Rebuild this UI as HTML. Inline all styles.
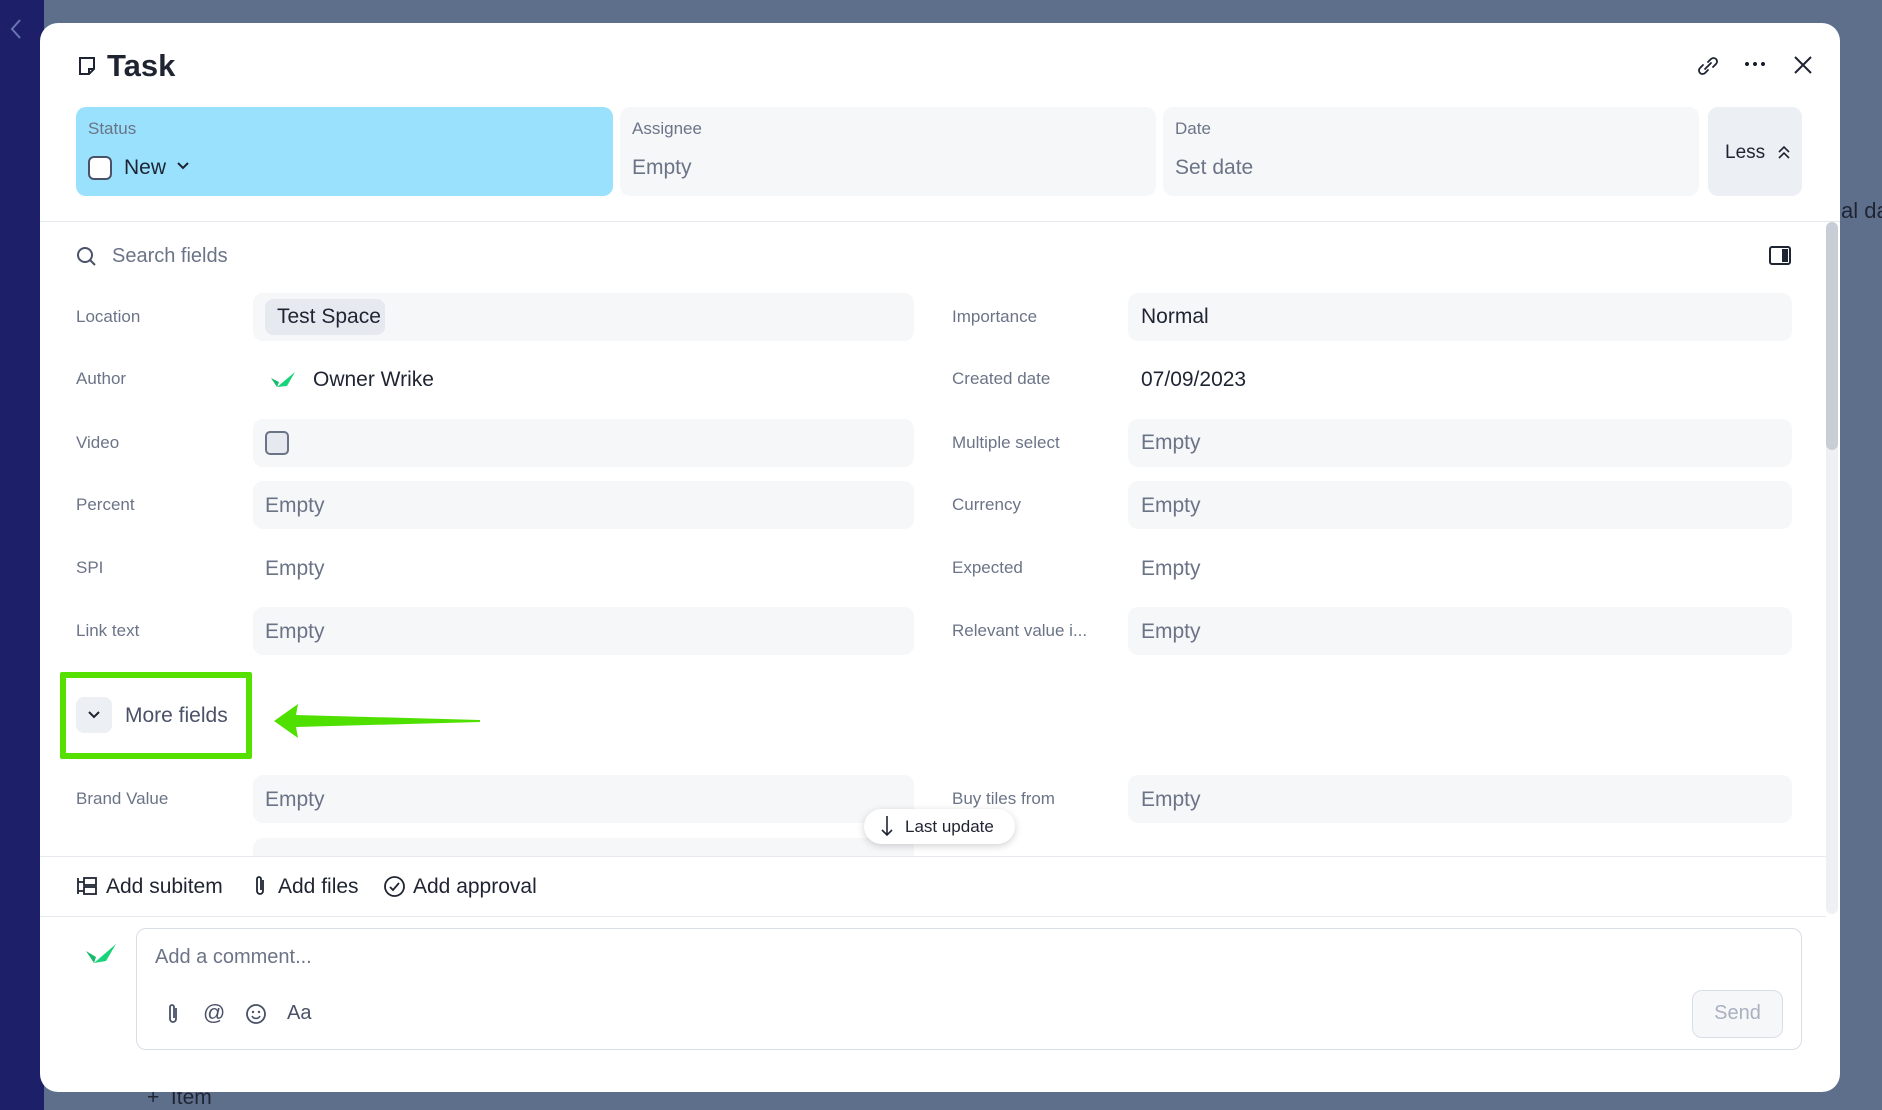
<!DOCTYPE html>
<html><head><meta charset="utf-8"><style>
*{box-sizing:border-box;margin:0;padding:0}
body{width:1882px;height:1110px;overflow:hidden;background:#5e6f8c;font-family:"Liberation Sans",sans-serif;position:relative;color:#1f2433}
.a{position:absolute;white-space:nowrap}
.sb{left:0;top:0;width:44px;height:1110px;background:#1d2068}
.modal{left:40px;top:23px;width:1800px;height:1069px;background:#fff;border-radius:18px}
.box{background:#f6f7f9;border-radius:10px}
.lbl{color:#6b7487;font-size:17px}
.val{font-size:21px;color:#1f2433}
.emp{font-size:21px;color:#6b7487}
.hl{height:1px;background:#e6e9ee}
</style></head><body>
<div class="a sb"></div>
<svg class="a" style="left:8px;top:18px" width="16" height="22"><path d="M12 2L4 11l8 9" stroke="#6a74b0" stroke-width="2" fill="none"/></svg>
<div class="a" style="left:147px;top:1086px;color:#1f2433;font-size:21px">+ &nbsp;Item</div>
<div class="a" style="left:1841px;top:198px;color:#1f2433;font-size:22px">al da</div>
<div class="a modal"></div>
<!-- header -->
<svg class="a" style="left:78px;top:56px" width="18" height="20"><path d="M2 2h14v11l-5 5H2z M11 18v-5h5" stroke="#1f2433" stroke-width="2" fill="none"/></svg>
<div class="a" style="left:107px;top:48px;font-size:31px;font-weight:bold">Task</div>
<svg class="a" style="left:1694px;top:52px" width="28" height="28"><path d="M11 17l6-6M9 13l-3 3a3.5 3.5 0 005 5l3-3M19 15l3-3a3.5 3.5 0 00-5-5l-3 3" stroke="#1f2433" stroke-width="1.8" fill="none" stroke-linecap="round"/></svg>
<div class="a" style="left:1743px;top:62px;width:22px;height:4px;background:radial-gradient(circle,#1f2433 2px,transparent 2.2px) 0 0/8px 4px"></div>
<svg class="a" style="left:1792px;top:54px" width="22" height="22"><path d="M3 3l16 16M19 3L3 19" stroke="#1f2433" stroke-width="2"/></svg>
<div class="a" style="left:76px;top:107px;width:537px;height:89px;background:#99e1fc;border-radius:10px"></div>
<div class="a lbl" style="left:88px;top:119px">Status</div>
<div class="a" style="left:88px;top:156px;width:24px;height:24px;border:2px solid #4a5268;border-radius:6px;background:#fff"></div>
<div class="a val" style="left:124px;top:156px">New</div>
<svg class="a" style="left:176px;top:160px" width="14" height="12"><path d="M2 3l5 5 5-5" stroke="#1f2433" stroke-width="2" fill="none"/></svg>
<div class="a box" style="left:620px;top:107px;width:536px;height:89px"></div>
<div class="a lbl" style="left:632px;top:119px">Assignee</div>
<div class="a emp" style="left:632px;top:156px">Empty</div>
<div class="a box" style="left:1163px;top:107px;width:536px;height:89px"></div>
<div class="a lbl" style="left:1175px;top:119px">Date</div>
<div class="a emp" style="left:1175px;top:156px">Set date</div>
<div class="a" style="left:1708px;top:107px;width:94px;height:89px;background:#eceff3;border-radius:10px"></div>
<div class="a" style="left:1725px;top:142px;font-size:19px;color:#1f2433">Less</div>
<svg class="a" style="left:1776px;top:144px" width="16" height="16"><path d="M3 8l5-5 5 5M3 14l5-5 5 5" stroke="#1f2433" stroke-width="1.6" fill="none"/></svg>
<div class="a hl" style="left:40px;top:221px;width:1800px"></div>
<!-- scrollbar -->
<div class="a" style="left:1826px;top:222px;width:12px;height:692px;background:#eef0f3;border-radius:6px"></div>
<div class="a" style="left:1826px;top:222px;width:12px;height:228px;background:#c9ced6;border-radius:6px"></div>
<!-- search -->
<svg class="a" style="left:76px;top:246px" width="22" height="22"><circle cx="9" cy="9" r="7" stroke="#4a5268" stroke-width="2" fill="none"/><path d="M14 14l5 5" stroke="#4a5268" stroke-width="2"/></svg>
<div class="a" style="left:112px;top:245px;font-size:20px;color:#6b7487">Search fields</div>
<svg class="a" style="left:1769px;top:246px" width="22" height="20"><rect x="1" y="1" width="20" height="17" rx="2" stroke="#1f2433" stroke-width="2" fill="none"/><rect x="13" y="3" width="6" height="13" fill="#1f2433"/></svg>
<!-- rows -->
<div class="a box" style="left:253px;top:293px;width:661px;height:48px"></div>
<div class="a" style="left:265px;top:299px;width:120px;height:36px;background:#e6eaf0;border-radius:8px"></div>
<div class="a val" style="left:277px;top:305px">Test Space</div>
<div class="a lbl" style="left:76px;top:307px">Location</div>
<div class="a lbl" style="left:952px;top:307px">Importance</div>
<div class="a box" style="left:1128px;top:293px;width:664px;height:48px"></div>
<div class="a val" style="left:1141px;top:305px">Normal</div>

<div class="a lbl" style="left:76px;top:369px">Author</div>
<svg class="a" style="left:269px;top:370px" width="28" height="20"><path d="M2 8l6 9 2-5z" fill="#17b96b"/><path d="M8 17L26 2l-8 14z" fill="#19d37a"/></svg>
<div class="a val" style="left:313px;top:368px">Owner Wrike</div>
<div class="a lbl" style="left:952px;top:369px">Created date</div>
<div class="a val" style="left:1141px;top:368px">07/09/2023</div>

<div class="a box" style="left:253px;top:419px;width:661px;height:48px"></div>
<div class="a" style="left:265px;top:431px;width:24px;height:24px;border:2px solid #6b7487;border-radius:5px;background:#e6eaf0"></div>
<div class="a lbl" style="left:76px;top:433px">Video</div>
<div class="a lbl" style="left:952px;top:433px">Multiple select</div>
<div class="a box" style="left:1128px;top:419px;width:664px;height:48px"></div>
<div class="a emp" style="left:1141px;top:431px">Empty</div>

<div class="a box" style="left:253px;top:481px;width:661px;height:48px"></div>
<div class="a lbl" style="left:76px;top:495px">Percent</div>
<div class="a emp" style="left:265px;top:494px">Empty</div>
<div class="a lbl" style="left:952px;top:495px">Currency</div>
<div class="a box" style="left:1128px;top:481px;width:664px;height:48px"></div>
<div class="a emp" style="left:1141px;top:494px">Empty</div>

<div class="a lbl" style="left:76px;top:558px">SPI</div>
<div class="a emp" style="left:265px;top:557px">Empty</div>
<div class="a lbl" style="left:952px;top:558px">Expected</div>
<div class="a emp" style="left:1141px;top:557px">Empty</div>

<div class="a box" style="left:253px;top:607px;width:661px;height:48px"></div>
<div class="a lbl" style="left:76px;top:621px">Link text</div>
<div class="a emp" style="left:265px;top:620px">Empty</div>
<div class="a lbl" style="left:952px;top:621px">Relevant value i...</div>
<div class="a box" style="left:1128px;top:607px;width:664px;height:48px"></div>
<div class="a emp" style="left:1141px;top:620px">Empty</div>

<!-- more fields -->
<div class="a" style="left:60px;top:672px;width:192px;height:87px;border:6px solid #56e000;border-radius:2px"></div>
<div class="a" style="left:76px;top:697px;width:36px;height:36px;background:#eceff3;border-radius:8px"></div>
<svg class="a" style="left:87px;top:709px" width="14" height="12"><path d="M2 3l5 5 5-5" stroke="#1f2433" stroke-width="2" fill="none"/></svg>
<div class="a" style="left:125px;top:704px;font-size:21px;color:#4a5268">More fields</div>
<svg class="a" style="left:272px;top:700px" width="212" height="42"><path d="M2 21L26 4 24 15 208 20 208 22 24 27 26 38z" fill="#4fe000"/></svg>

<div class="a box" style="left:253px;top:775px;width:661px;height:48px"></div>
<div class="a lbl" style="left:76px;top:789px">Brand Value</div>
<div class="a emp" style="left:265px;top:788px">Empty</div>
<div class="a lbl" style="left:952px;top:789px">Buy tiles from</div>
<div class="a box" style="left:1128px;top:775px;width:664px;height:48px"></div>
<div class="a emp" style="left:1141px;top:788px">Empty</div>
<div class="a box" style="left:253px;top:838px;width:661px;height:18px;border-radius:10px 10px 0 0"></div>
<div class="a" style="left:864px;top:809px;width:151px;height:35px;background:#fff;border-radius:18px;box-shadow:0 2px 8px rgba(0,0,0,.18)"></div>
<svg class="a" style="left:880px;top:815px" width="14" height="22"><path d="M7 1v19M2 15l5 5 5-5" stroke="#1f2433" stroke-width="1.6" fill="none"/></svg>
<div class="a" style="left:905px;top:817px;font-size:17px;color:#1f2433">Last update</div>
<div class="a hl" style="left:40px;top:856px;width:1786px"></div>
<!-- actions -->
<svg class="a" style="left:76px;top:876px" width="22" height="20"><path d="M2 2v16M2 6h6M2 15h6" stroke="#1f2433" stroke-width="1.8" fill="none"/><rect x="8" y="2" width="12" height="7" stroke="#1f2433" stroke-width="1.8" fill="none"/><rect x="8" y="11" width="12" height="7" stroke="#1f2433" stroke-width="1.8" fill="none"/></svg>
<div class="a" style="left:106px;top:875px;font-size:21px">Add subitem</div>
<svg class="a" style="left:252px;top:874px" width="16" height="24"><path d="M11 6v11a3 3 0 01-6 0V5a2 2 0 014 0v11" stroke="#1f2433" stroke-width="1.8" fill="none"/></svg>
<div class="a" style="left:278px;top:875px;font-size:21px">Add files</div>
<svg class="a" style="left:383px;top:875px" width="23" height="23"><circle cx="11.5" cy="11.5" r="9.5" stroke="#1f2433" stroke-width="1.8" fill="none"/><path d="M7 12l3 3 6-7" stroke="#1f2433" stroke-width="1.8" fill="none"/></svg>
<div class="a" style="left:413px;top:875px;font-size:21px">Add approval</div>
<div class="a hl" style="left:40px;top:916px;width:1786px"></div>
<!-- comment -->
<svg class="a" style="left:84px;top:942px" width="34" height="24"><path d="M2 9l8 12 2-6z" fill="#17b96b"/><path d="M10 21L32 2l-10 17z" fill="#19d37a"/></svg>
<div class="a" style="left:136px;top:928px;width:1666px;height:122px;border:1.5px solid #d8dde6;border-radius:10px"></div>
<div class="a" style="left:155px;top:946px;font-size:20px;color:#6b7487">Add a comment...</div>
<svg class="a" style="left:165px;top:1003px" width="16" height="22"><path d="M11 5v11a3 3 0 01-6 0V4a2 2 0 014 0v11" stroke="#4a5268" stroke-width="1.8" fill="none"/></svg>
<div class="a" style="left:203px;top:1000px;font-size:22px;color:#4a5268">@</div>
<svg class="a" style="left:245px;top:1003px" width="22" height="22"><circle cx="11" cy="11" r="9" stroke="#4a5268" stroke-width="1.8" fill="none"/><circle cx="8" cy="9" r="1.2" fill="#4a5268"/><circle cx="14" cy="9" r="1.2" fill="#4a5268"/><path d="M7 13a4.5 4.5 0 008 0" stroke="#4a5268" stroke-width="1.6" fill="none"/></svg>
<div class="a" style="left:287px;top:1002px;font-size:20px;color:#4a5268">Aa</div>
<div class="a" style="left:1692px;top:990px;width:91px;height:48px;border:1.5px solid #d8dde6;border-radius:10px;background:#f6f7f9;color:#a9b1c0;font-size:20px;text-align:center;line-height:45px">Send</div>
</body></html>
